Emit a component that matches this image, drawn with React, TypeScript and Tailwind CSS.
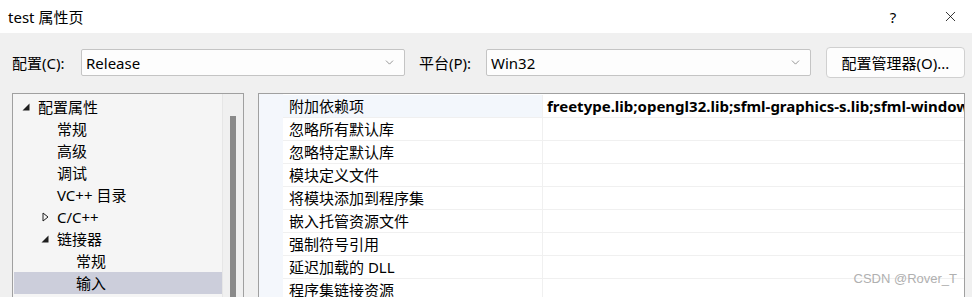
import { ChevronDown, X } from 'lucide-react';

const treeRows = [
  { label: '配置属性', level: 0, arrow: 'open' },
  { label: '常规', level: 1 },
  { label: '高级', level: 1 },
  { label: '调试', level: 1 },
  { label: 'VC++ 目录', level: 1 },
  { label: 'C/C++', level: 1, arrow: 'closed' },
  { label: '链接器', level: 1, arrow: 'open' },
  { label: '常规', level: 2 },
  { label: '输入', level: 2, selected: true },
];

const props = [
  '附加依赖项',
  '忽略所有默认库',
  '忽略特定默认库',
  '模块定义文件',
  '将模块添加到程序集',
  '嵌入托管资源文件',
  '强制符号引用',
  '延迟加载的 DLL',
  '程序集链接资源',
];

function Arrow({ kind }: { kind?: string }) {
  if (kind === 'open')
    return (
      <svg width="8" height="8" viewBox="0 0 8 8">
        <polygon points="7.5,0.5 7.5,7.5 0.5,7.5" fill="#1e1e1e" />
      </svg>
    );
  if (kind === 'closed')
    return (
      <svg width="7" height="10" viewBox="0 0 7 10">
        <polygon points="1,1 6,5 1,9" fill="none" stroke="#1e1e1e" strokeWidth="1" />
      </svg>
    );
  return null;
}

function Combo({ value, width }: { value: string; width: string }) {
  return (
    <div
      className={`${width} shrink-0 h-[27px] bg-[#fdfdfd] border border-[#c4c4c4] rounded-[2px] flex items-center justify-between pl-[4px] pr-[8px]`}
    >
      <span>{value}</span>
      <ChevronDown size={13} strokeWidth={1.2} className="text-[#606060]" />
    </div>
  );
}

export default function App() {
  return (
    <div className="w-[972px] h-[297px] overflow-hidden relative flex flex-col text-[15px] leading-[20px] text-black font-['Segoe_UI','Noto_Sans','Noto_Sans_CJK_SC',sans-serif]">
      {/* title bar */}
      <div className="h-[33px] bg-white flex items-center justify-between pl-[8px] shrink-0">
        <span>test 属性页</span>
        <div className="flex items-center">
          <span className="w-[20px] text-center text-[15px] mr-[25px]">?</span>
          <span className="w-[44px] flex justify-center">
            <X size={17} strokeWidth={1.1} />
          </span>
        </div>
      </div>

      <div className="flex-1 bg-[#f0f0f0] pl-[12px] pr-[7px] pt-[14px]">
        {/* config row */}
        <div className="h-[31px] flex items-center">
          <span className="w-[69px] shrink-0">配置(C):</span>
          <Combo value="Release" width="w-[324px]" />
          <span className="w-[67px] shrink-0 ml-[14px]">平台(P):</span>
          <Combo value="Win32" width="w-[325px]" />
          <button className="ml-[15px] shrink-0 w-[139px] h-[31px] bg-[#fdfdfd] border border-[#d0d0d0] rounded-[4px]">
            配置管理器(O)...
          </button>
        </div>

        {/* panels */}
        <div className="flex mt-[15px]">
          <div className="w-[232px] shrink-0 h-[210px] border border-[#a0a0a0] bg-[#f5f5f5] flex">
            <div className="w-[209px] pt-[2px] pl-[1px]">
              {treeRows.map((r, i) => (
                <div
                  key={i}
                  className={`h-[22px] flex items-center ${r.selected ? 'bg-[#cccedb]' : ''}`}
                >
                  <div
                    className="w-[24px] flex justify-center shrink-0"
                    style={{ marginLeft: r.level * 19 }}
                  >
                    <Arrow kind={r.arrow} />
                  </div>
                  <span className="whitespace-nowrap">{r.label}</span>
                </div>
              ))}
            </div>
            <div className="flex-1 border-l border-[#e6e6e6] bg-[#f0f0f0] flex justify-center pt-[22px]">
              <div className="w-[6px] h-[200px] bg-[#8a8a8a]" />
            </div>
          </div>

          <div className="ml-[14px] shrink-0 w-[707px] h-[210px] border border-[#a0a0a0] bg-white flex">
            <div className="w-[24px] bg-[#f4f7fc] shrink-0" />
            <div className="flex-1 pt-[1px] overflow-hidden">
              {props.map((p, i) => (
                <div key={i} className="h-[23px] flex border-b border-[#f0f0f0]">
                  <div
                    className={`w-[260px] shrink-0 pl-[6px] flex items-center border-r border-[#f0f0f0] ${i === 0 ? 'bg-[#f3f7fc]' : ''}`}
                  >
                    {p}
                  </div>
                  <div className="flex-1 pl-[4px] flex items-center overflow-hidden whitespace-nowrap font-bold">
                    {i === 0 ? 'freetype.lib;opengl32.lib;sfml-graphics-s.lib;sfml-window-s.lib;sfml-system-s.lib' : ''}
                  </div>
                </div>
              ))}
            </div>
          </div>
        </div>
      </div>

      <span className="absolute right-[15px] bottom-[8px] text-[13px] text-[#b0b0b0] font-['Liberation_Sans',sans-serif]">
        CSDN @Rover_T
      </span>
    </div>
  );
}
